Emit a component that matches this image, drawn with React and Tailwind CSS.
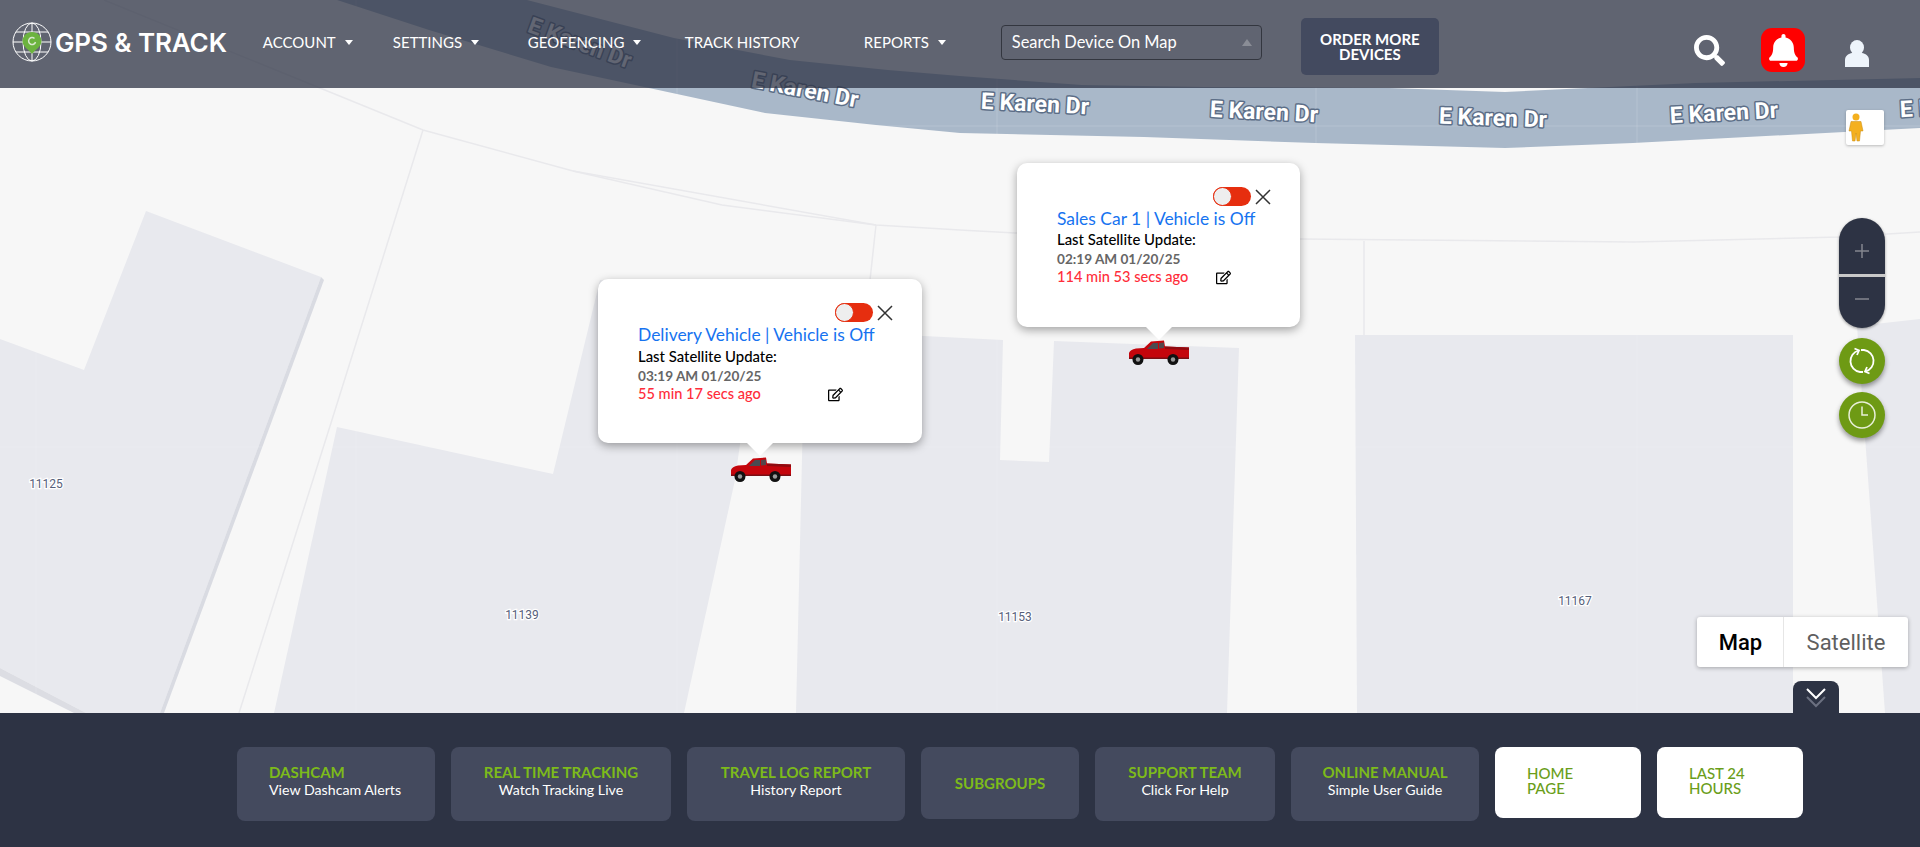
import { FaSearch, FaBell, FaRegEdit } from 'react-icons/fa';

const navItems = [
  { label: 'ACCOUNT', className: 'ml-[36px] w-[130px]', caret: true },
  { label: 'SETTINGS', className: 'w-[135px]', caret: true },
  { label: 'GEOFENCING', className: 'w-[157px]', caret: true },
  { label: 'TRACK HISTORY', className: 'w-[179px]' },
  { label: 'REPORTS', className: 'w-[137px]', caret: true },
];

const footerCards = [
  { title: 'DASHCAM', sub: 'View Dashcam Alerts', className: 'w-[198px] pl-[32px] h-[74px] items-start pb-[6px]' },
  { title: 'REAL TIME TRACKING', sub: 'Watch Tracking Live', className: 'w-[220px] h-[74px] items-center pb-[6px]' },
  { title: 'TRAVEL LOG REPORT', sub: 'History Report', className: 'w-[218px] h-[74px] items-center pb-[6px]' },
  { title: 'SUBGROUPS', className: 'w-[158px] h-[72px] items-center' },
  { title: 'SUPPORT TEAM', sub: 'Click For Help', className: 'w-[180px] h-[74px] items-center pb-[6px]' },
  { title: 'ONLINE MANUAL', sub: 'Simple User Guide', className: 'w-[188px] h-[74px] items-center pb-[6px]' },
];

const roadLabels = [
  { x: 580, y: 43, r: 20, t: 'E Karen Dr' },
  { x: 805, y: 90, r: 11, t: 'E Karen Dr' },
  { x: 1035, y: 104, r: 3, t: 'E Karen Dr' },
  { x: 1264, y: 112, r: 3, t: 'E Karen Dr' },
  { x: 1493, y: 118, r: 2, t: 'E Karen Dr' },
  { x: 1724, y: 113, r: -3, t: 'E Karen Dr' },
  { x: 1954, y: 107, r: -3, t: 'E Karen Dr' },
];

const addressLabels = [
  { x: 46, y: 488, t: '11125' },
  { x: 522, y: 619, t: '11139' },
  { x: 1015, y: 621, t: '11153' },
  { x: 1575, y: 605, t: '11167' },
];

function MapBackground() {
  return (
    <svg className="absolute inset-0 h-full w-full" viewBox="0 0 1920 713">
      <rect width="1920" height="713" fill="#f7f7f7" />
      <path d="M0 339L84 370L146 211L321 277L160 713L86 713L0 668Z" fill="#e8e9ee" />
      <path d="M321 277L324 280L164 713L160 713Z" fill="#d9dbe2" />
      <path d="M0 668L86 713L74 713L0 676Z" fill="#dcdde3" />
      <path d="M337 427L553 474L600 280L760 300L735 480L684 713L274 713Z" fill="#e8e9ee" />
      <path d="M805 330L1003 340L1000 460L1049 462L1054 341L1239 348L1227 713L796 713Z" fill="#e8e9ee" />
      <path d="M1355 335L1793 335L1793 713L1357 713Z" fill="#e8e9ee" />
      <path d="M1857 326L1920 319L1920 713L1885 713Z" fill="#e8e9ee" />
      <path
        d="M337 0L429 30L551 67L649 88L765 113L876 125L960 133L1144 137L1315 143L1505 148L1633 143L1920 128L1920 78L1695 83L1609 87L1505 92L1389 88L1205 87L1082 85L960 76L888 70L790 60L674 38L527 0Z"
        fill="#a9b8c9"
      />
      <g stroke="#ffffff" strokeOpacity="0.15" strokeWidth="1">
        <path d="M36 0V713M356 0V713M677 0V713M997 0V713M1316 0V713M1637 0V713M0 126H1920M0 447H1920" />
      </g>
      <g fill="none" stroke="#e9e9ec" strokeWidth="1.5">
        <path d="M104 0L423 130L573 171L876 225L960 230L1015 233L1300 239L1634 242L1839 237L1920 232" />
        <path d="M573 171L722 205L876 225" />
        <path d="M423 130L331 423L239 713" />
        <path d="M876 225L870 280" />
        <path d="M1364 241V335" />
      </g>
      {roadLabels.map(l => (
        <text
          key={l.x}
          x={l.x}
          y={l.y}
          transform={`rotate(${l.r} ${l.x} ${l.y})`}
          textAnchor="middle"
          dominantBaseline="central"
          fontFamily="Roboto, sans-serif"
          fontWeight="700"
          fontSize="23"
          fill="#ffffff"
          stroke="#5c6e87"
          strokeWidth="3"
          paintOrder="stroke"
          strokeLinejoin="round"
        >
          {l.t}
        </text>
      ))}
      {addressLabels.map(l => (
        <text
          key={l.x}
          x={l.x}
          y={l.y}
          textAnchor="middle"
          fontFamily="Roboto, sans-serif"
          fontSize="12"
          fill="#56607a"
          stroke="#ffffff"
          strokeWidth="2.5"
          paintOrder="stroke"
        >
          {l.t}
        </text>
      ))}
    </svg>
  );
}

function Logo() {
  return (
    <svg width="42" height="42" viewBox="0 0 42 42" className="shrink-0">
      <g fill="none" stroke="#ffffff" strokeWidth="1">
        <circle cx="21" cy="21" r="19" />
        <ellipse cx="21" cy="21" rx="9" ry="19" />
        <path d="M21 2V40M2 21H40M5 11H37M5 31H37" />
      </g>
      <path d="M21 11C15.500 11 11.500 15 11.500 20.500C11.500 25.500 18 29 21 33C24 29 30.500 25.500 30.500 20.500C30.500 15 26.500 11 21 11Z" fill="#6cb33f" />
      <path d="M23.500 17.500A3.500 3.500 0 1 0 24.500 21" fill="none" stroke="#d9e8cf" strokeWidth="1.500" />
    </svg>
  );
}

function Truck({ className }) {
  return (
    <svg viewBox="0 0 61 25" className={`h-[25px] w-[61px] ${className}`}>
      <path d="M1 13Q2 9.500 8 8.500L16 8L23 1.500L36 0.500L37 6.500L61 7.500L61 18L1 19Z" fill="#c4050c" />
      <path d="M37 6.500L61 7.500L61 10L37 9Z" fill="#8f0b10" />
      <path d="M19 9L25 3L30 3L30 9Z" fill="#4a4a50" />
      <path d="M31 3L36 2.500L36 8L31 8.500Z" fill="#55454a" />
      <path d="M1 17.500H61V19H1Z" fill="#7a0f14" />
      <circle cx="10" cy="19.500" r="5.500" fill="#111111" />
      <circle cx="45" cy="19.500" r="5.500" fill="#111111" />
      <circle cx="10" cy="19.500" r="2.200" fill="#9a9a9a" />
      <circle cx="45" cy="19.500" r="2.200" fill="#9a9a9a" />
    </svg>
  );
}

function Popup({ title, date, ago, className, lastGap, editGap }) {
  return (
    <div className={`absolute ${className}`}>
      <div className="relative flex h-full flex-col rounded-[10px] bg-white pl-[40px] pr-[28px] pt-[24px] font-[family-name:Lato,sans-serif] shadow-[0_3px_10px_rgba(0,0,0,0.35)]">
        <div className="flex h-[19px] items-center justify-end gap-[3px]">
          <span className="flex h-[19px] w-[38px] items-center rounded-full bg-[#e62e0f]">
            <span className="h-[19px] w-[19px] rounded-full border border-[#e62e0f] bg-[#eeeeee]" />
          </span>
          <svg width="18" height="18" viewBox="0 0 18 18">
            <path d="M2 2L16 16M16 2L2 16" stroke="#333333" strokeWidth="1.500" />
          </svg>
        </div>
        <p className="mt-[3px] whitespace-nowrap text-[17.450px] leading-[20px] text-[#1673f0]">{title}</p>
        <p className={`text-[14.900px] font-medium leading-[20px] text-black ${lastGap}`}>Last Satellite Update:</p>
        <p className="text-[13.600px] font-bold leading-[20px] text-[#666666]">{date}</p>
        <div className="-mt-[1px] flex items-center">
          <p className="text-[14.600px] font-medium leading-[18px] text-[#ff2d3a]">{ago}</p>
          <FaRegEdit className={`text-[15px] text-black ${editGap}`} />
        </div>
        <div className="absolute left-1/2 top-full h-0 w-0 -translate-x-1/2 border-x-[13px] border-t-[13px] border-x-transparent border-t-white" />
      </div>
    </div>
  );
}

export default function App() {
  return (
    <div className="relative h-[847px] w-[1920px] overflow-hidden font-[family-name:Lato,sans-serif]">
      <main className="relative h-[713px]">
        <MapBackground />

        <Popup
          className="left-[598px] top-[279px] h-[164px] w-[324px]"
          title="Delivery Vehicle | Vehicle is Off"
          date="03:19 AM 01/20/25"
          ago="55 min 17 secs ago"
          lastGap="mt-[1px]"
          editGap="ml-[67px]"
        />
        <Truck className="absolute left-[730px] top-[457px]" />

        <Popup
          className="left-[1017px] top-[163px] h-[164px] w-[283px]"
          title="Sales Car 1 | Vehicle is Off"
          date="02:19 AM 01/20/25"
          ago="114 min 53 secs ago"
          lastGap="mt-0"
          editGap="ml-[28px]"
        />
        <Truck className="absolute left-[1128px] top-[340px]" />

        {/* pegman */}
        <div className="absolute left-[1846px] top-[110px] flex h-[35px] w-[38px] items-center justify-start rounded-[2px] bg-white pl-[2px] shadow-[0_1px_3px_rgba(0,0,0,0.25)]">
          <svg width="16" height="29" viewBox="0 0 16 29">
            <circle cx="8" cy="4" r="3.500" fill="#f4b01e" />
            <path d="M3 8.500H13L15 18H12.500L11.500 28H9L8 20L7 28H4.500L3.500 18H1Z" fill="#f4b01e" stroke="#c98a10" strokeWidth="0.500" />
          </svg>
        </div>

        {/* zoom + action buttons */}
        <div className="absolute left-[1839px] top-[218px] flex w-[46px] flex-col gap-[9px]">
          <div className="mb-[1px] flex h-[110px] flex-col rounded-full bg-[#2d3344] shadow-[0_1px_3px_rgba(0,0,0,0.4)]">
            <div className="flex flex-1 items-center justify-center pt-[11px]">
              <svg width="16" height="16" viewBox="0 0 16 16">
                <path d="M8 1V15M1 8H15" stroke="#84878f" strokeWidth="1.500" />
              </svg>
            </div>
            <div className="h-[3px] bg-[#c9c9c9]" />
            <div className="flex flex-1 items-center justify-center pb-[7px]">
              <svg width="16" height="16" viewBox="0 0 16 16">
                <path d="M1 8H15" stroke="#84878f" strokeWidth="1.500" />
              </svg>
            </div>
          </div>
          <button className="flex h-[46px] w-[46px] items-center justify-center rounded-full bg-[#6e9a14] shadow-[0_3px_5px_rgba(0,0,0,0.4)]">
            <svg width="30" height="30" viewBox="0 0 30 30" fill="none" stroke="#ffffff" strokeWidth="1.800">
              <path d="M11.500 4.500A11 11 0 0 0 13 26H16" />
              <path d="M18.500 25.500A11 11 0 0 0 17 4H14" />
              <path d="M7.500 2.500L12 4.500L10 9" />
              <path d="M22.500 27.500L18 25.500L20 21" />
            </svg>
          </button>
          <button className="-mt-[1px] flex h-[46px] w-[46px] items-center justify-center rounded-full bg-[#6e9a14] shadow-[0_3px_5px_rgba(0,0,0,0.4)]">
            <svg width="30" height="30" viewBox="0 0 30 30" fill="none" stroke="#e8efd8" strokeWidth="1.500">
              <circle cx="15" cy="15" r="13" />
              <path d="M15 6.500V15H21" />
            </svg>
          </button>
        </div>

        {/* map type */}
        <div className="absolute left-[1697px] top-[617px] flex h-[50px] w-[211px] rounded-[3px] bg-white font-[family-name:Roboto,sans-serif] text-[22px] shadow-[0_1px_4px_rgba(0,0,0,0.3)]">
          <button className="w-[87px] border-r border-[#e6e6e6] pl-[1px] font-medium text-black">Map</button>
          <button className="flex-1 text-[#5f5f5f]">Satellite</button>
        </div>

        {/* collapse tab */}
        <div className="absolute bottom-0 left-[1793px] flex h-[32px] w-[46px] items-center justify-center rounded-t-[8px] bg-[#2d3344]">
          <svg width="24" height="24" viewBox="0 0 24 24" fill="none" strokeWidth="2">
            <path d="M3 12L12 21L21 12" stroke="#6b7080" />
            <path d="M3 4L12 13L21 4" stroke="#ffffff" />
          </svg>
        </div>
      </main>

      <header className="absolute inset-x-0 top-0 flex h-[88px] items-center bg-[#2d3344]/75 pb-[4px] text-white">
        <div className="ml-[11px] flex items-center gap-[2px]">
          <Logo />
          <span className="whitespace-nowrap font-[family-name:Inter,sans-serif] text-[26px] font-semibold tracking-[-0.1px]">GPS &amp; TRACK</span>
        </div>
        {navItems.map(item => (
          <a key={item.label} className={`flex items-center gap-[9px] whitespace-nowrap text-[15px] ${item.className}`}>
            {item.label}
            {item.caret && <span className="h-0 w-0 border-x-[4.500px] border-t-[5px] border-x-transparent border-t-white" />}
          </a>
        ))}
        <div className="flex h-[35px] w-[261px] items-center justify-between rounded-[4px] border border-[#33363f] pl-[10px] pr-[9px] text-[16.400px]">
          Search Device On Map
          <span className="h-0 w-0 border-x-[5px] border-b-[7px] border-x-transparent border-b-[#8a8d96]" />
        </div>
        <button className="ml-[39px] mt-[9px] h-[57px] w-[138px] rounded-[5px] bg-[#434a5f] text-[15px] font-bold leading-[15px]">
          ORDER MORE
          <br />
          DEVICES
        </button>
        <div className="ml-auto mt-[16px] flex items-center">
          <FaSearch className="mr-[36px] h-[31px] w-[31px]" />
          <div className="mr-[40px] flex h-[44px] w-[44px] items-center justify-center rounded-[11px] bg-[#ff0000]">
            <FaBell className="h-[33px] w-[33px]" />
          </div>
          <svg width="24" height="27" viewBox="0 0 24 27" className="mr-[51px] mt-[7px]">
            <ellipse cx="12" cy="7.500" rx="7" ry="7.500" fill="#eef4fb" />
            <path d="M0 27V20C0 15.500 4 13.500 7 13H17C20 13.500 24 15.500 24 20V27Z" fill="#eef4fb" />
          </svg>
        </div>
      </header>

      <footer className="flex h-[134px] items-start gap-4 bg-[#2d3344] pl-[237px] pt-[34px]">
        {footerCards.map(card => (
          <a key={card.title} className={`flex flex-col justify-center rounded-[8px] bg-[#444a5e] ${card.className}`}>
            <span className="text-[15px] font-bold leading-[18px] text-[#7dbb1a]">{card.title}</span>
            {card.sub && <span className="text-[14.200px] leading-[18px] text-white">{card.sub}</span>}
          </a>
        ))}
        {['HOME PAGE', 'LAST 24 HOURS'].map(label => (
          <a key={label} className="flex h-[71px] w-[146px] items-start rounded-[8px] bg-white pl-[32px] pt-[19px] text-[15px] font-medium leading-[15px] text-[#6b9e1a]">
            <span className="w-[80px]">{label}</span>
          </a>
        ))}
      </footer>
    </div>
  );
}
